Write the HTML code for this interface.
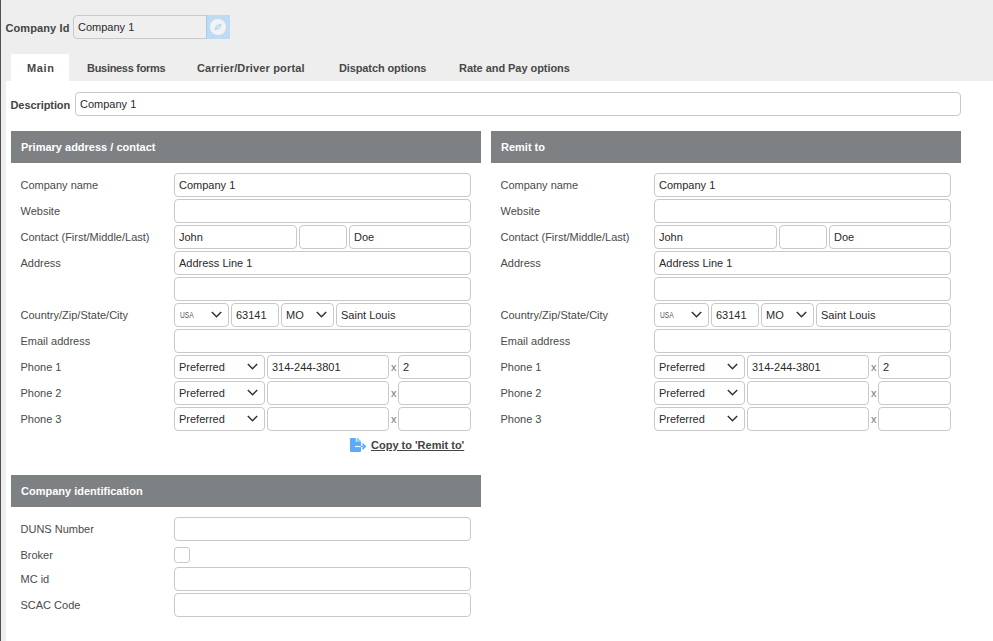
<!DOCTYPE html><html><head><meta charset='utf-8'><style>
*{box-sizing:border-box;margin:0;padding:0}
html,body{width:993px;height:641px;overflow:hidden;background:#fff;font-family:"Liberation Sans",sans-serif;font-size:11px}
.abs{position:absolute}
.topbar{position:absolute;left:0;top:0;width:993px;height:81px;background:#eeeeee}
.lb{position:absolute;left:0;top:0;width:1px;height:641px;background:#505050}
.lstrip{position:absolute;left:1px;top:81px;width:5px;height:560px;background:#eeeeee}
.inp{position:absolute;height:24px;border:1px solid #c9c9c9;border-radius:4px;background:#fff;color:#2a2a2a;padding-left:4px;line-height:22px;white-space:nowrap;overflow:hidden}
.lbl{position:absolute;color:#4a4a4a;line-height:14px;white-space:nowrap}
.hdr{position:absolute;height:32px;background:#7e8184;color:#fff;font-weight:bold;line-height:32px;padding-left:10px}
.tab{position:absolute;top:61px;font-weight:bold;color:#484848;line-height:14px;white-space:nowrap}
.sel .chev{position:absolute;top:7.3px;width:11px;height:7px}
.x{position:absolute;color:#777;line-height:14px}
</style></head><body>
<div class='topbar'></div><div class='lstrip'></div><div class='lb'></div>
<div class='lbl' style='left:5.5px;top:21px;font-weight:bold;color:#444;letter-spacing:0.1px'>Company Id</div>
<div class='inp' style='left:73px;top:15px;width:134px;background:#efefef;border-radius:4px 0 0 4px'>Company 1</div>
<div class='abs' style='left:206px;top:15px;width:24px;height:24px;background:#bddcf4;border-left:1px solid #a9c9e3'><svg width='24' height='24' viewBox='0 0 24 24' style='position:absolute;left:-1px;top:0'><circle cx='12' cy='12' r='8' fill='#f3f3f3'/><path d='M16 8.5 L13.7 13.9 L8 15.5 L10.3 10.1 Z' fill='#bddcf4'/><rect x='11.2' y='11.2' width='1.6' height='1.6' fill='#f3f3f3'/></svg></div>
<div class='abs' style='left:11px;top:54px;width:58px;height:27px;background:#fff'></div>
<div class='tab' style='left:27px;letter-spacing:0.65px'>Main</div>
<div class='tab' style='left:87px;letter-spacing:-0.3px'>Business forms</div>
<div class='tab' style='left:197px;letter-spacing:0.15px'>Carrier/Driver portal</div>
<div class='tab' style='left:339px;letter-spacing:-0.12px'>Dispatch options</div>
<div class='tab' style='left:459px;letter-spacing:-0.05px'>Rate and Pay options</div>
<div class='lbl' style='left:10.5px;top:98px;font-weight:bold;color:#444;letter-spacing:-0.08px'>Description</div>
<div class='inp' style='left:75px;top:92px;width:886px'>Company 1</div>
<div class='hdr' style='left:11px;top:131px;width:470px'>Primary address / contact</div>
<div class='lbl' style='left:20.5px;top:178px'>Company name</div>
<div class='lbl' style='left:20.5px;top:204px'>Website</div>
<div class='lbl' style='left:20.5px;top:230px'>Contact (First/Middle/Last)</div>
<div class='lbl' style='left:20.5px;top:256px'>Address</div>
<div class='lbl' style='left:20.5px;top:308px'>Country/Zip/State/City</div>
<div class='lbl' style='left:20.5px;top:334px'>Email address</div>
<div class='lbl' style='left:20.5px;top:360px'>Phone 1</div>
<div class='lbl' style='left:20.5px;top:386px'>Phone 2</div>
<div class='lbl' style='left:20.5px;top:412px'>Phone 3</div>
<div class='inp' style='left:174px;top:173px;width:297px'>Company 1</div>
<div class='inp' style='left:174px;top:199px;width:297px'></div>
<div class='inp' style='left:174px;top:225px;width:123px'>John</div>
<div class='inp' style='left:299px;top:225px;width:48px'></div>
<div class='inp' style='left:349px;top:225px;width:122px'>Doe</div>
<div class='inp' style='left:174px;top:251px;width:297px'>Address Line 1</div>
<div class='inp' style='left:174px;top:277px;width:297px'></div>
<div class='inp sel' style='left:174px;top:303px;width:55px'><span style='display:inline-block;font-size:8.3px;color:#555;transform:scaleX(0.8);transform-origin:0 50%;margin-left:0.6px;position:relative;top:-1px'>USA</span><svg class='chev' viewBox='0 0 11 7' style='right:6.5px'><path d='M0.8 1 L5.5 5.7 L10.2 1' fill='none' stroke='#333' stroke-width='1.5'/></svg></div>
<div class='inp' style='left:231px;top:303px;width:48px'>63141</div>
<div class='inp sel' style='left:281px;top:303px;width:53px'>MO<svg class='chev' viewBox='0 0 11 7' style='right:6.5px'><path d='M0.8 1 L5.5 5.7 L10.2 1' fill='none' stroke='#333' stroke-width='1.5'/></svg></div>
<div class='inp' style='left:336px;top:303px;width:135px'>Saint Louis</div>
<div class='inp' style='left:174px;top:329px;width:297px'></div>
<div class='inp sel' style='left:174px;top:355px;width:91px'>Preferred<svg class='chev' viewBox='0 0 11 7' style='right:6.5px'><path d='M0.8 1 L5.5 5.7 L10.2 1' fill='none' stroke='#333' stroke-width='1.5'/></svg></div>
<div class='inp' style='left:267px;top:355px;width:122px'>314-244-3801</div>
<div class='x' style='left:391px;top:360px'>x</div>
<div class='inp' style='left:398px;top:355px;width:73px'>2</div>
<div class='inp sel' style='left:174px;top:381px;width:91px'>Preferred<svg class='chev' viewBox='0 0 11 7' style='right:6.5px'><path d='M0.8 1 L5.5 5.7 L10.2 1' fill='none' stroke='#333' stroke-width='1.5'/></svg></div>
<div class='inp' style='left:267px;top:381px;width:122px'></div>
<div class='x' style='left:391px;top:386px'>x</div>
<div class='inp' style='left:398px;top:381px;width:73px'></div>
<div class='inp sel' style='left:174px;top:407px;width:91px'>Preferred<svg class='chev' viewBox='0 0 11 7' style='right:6.5px'><path d='M0.8 1 L5.5 5.7 L10.2 1' fill='none' stroke='#333' stroke-width='1.5'/></svg></div>
<div class='inp' style='left:267px;top:407px;width:122px'></div>
<div class='x' style='left:391px;top:412px'>x</div>
<div class='inp' style='left:398px;top:407px;width:73px'></div>
<svg class='abs' style='left:345px;top:432px' width='30' height='25' viewBox='0 0 30 25'><path d='M6 6 L12.5 6 L16 9.5 L16 19 Q16 20 15 20 L6 20 Q5 20 5 19 L5 7 Q5 6 6 6 Z' fill='#5eaaf6'/><path d='M11.8 6 L12.5 6 L16 9.5 L16 9.8 L11.8 9.8 Z' fill='#9ccbf8'/><path d='M11.3 6 L11.3 9.8' stroke='#fff' stroke-width='0.9'/><path d='M10.2 14.5 L15.8 14.5' stroke='#fff' stroke-width='1.2'/><path d='M15.8 14.5 L20.2 14.5 M17.5 11.8 L20.2 14.5 L17.5 17.2' fill='none' stroke='#5eaaf6' stroke-width='1.6'/></svg>
<div class='abs' style='left:371px;top:438px;font-weight:bold;color:#444;text-decoration:underline;line-height:14px;white-space:nowrap'>Copy to 'Remit to'</div>
<div class='hdr' style='left:491px;top:131px;width:470px'>Remit to</div>
<div class='lbl' style='left:500.5px;top:178px'>Company name</div>
<div class='lbl' style='left:500.5px;top:204px'>Website</div>
<div class='lbl' style='left:500.5px;top:230px'>Contact (First/Middle/Last)</div>
<div class='lbl' style='left:500.5px;top:256px'>Address</div>
<div class='lbl' style='left:500.5px;top:308px'>Country/Zip/State/City</div>
<div class='lbl' style='left:500.5px;top:334px'>Email address</div>
<div class='lbl' style='left:500.5px;top:360px'>Phone 1</div>
<div class='lbl' style='left:500.5px;top:386px'>Phone 2</div>
<div class='lbl' style='left:500.5px;top:412px'>Phone 3</div>
<div class='inp' style='left:654px;top:173px;width:297px'>Company 1</div>
<div class='inp' style='left:654px;top:199px;width:297px'></div>
<div class='inp' style='left:654px;top:225px;width:123px'>John</div>
<div class='inp' style='left:779px;top:225px;width:48px'></div>
<div class='inp' style='left:829px;top:225px;width:122px'>Doe</div>
<div class='inp' style='left:654px;top:251px;width:297px'>Address Line 1</div>
<div class='inp' style='left:654px;top:277px;width:297px'></div>
<div class='inp sel' style='left:654px;top:303px;width:55px'><span style='display:inline-block;font-size:8.3px;color:#555;transform:scaleX(0.8);transform-origin:0 50%;margin-left:0.6px;position:relative;top:-1px'>USA</span><svg class='chev' viewBox='0 0 11 7' style='right:6.5px'><path d='M0.8 1 L5.5 5.7 L10.2 1' fill='none' stroke='#333' stroke-width='1.5'/></svg></div>
<div class='inp' style='left:711px;top:303px;width:48px'>63141</div>
<div class='inp sel' style='left:761px;top:303px;width:53px'>MO<svg class='chev' viewBox='0 0 11 7' style='right:6.5px'><path d='M0.8 1 L5.5 5.7 L10.2 1' fill='none' stroke='#333' stroke-width='1.5'/></svg></div>
<div class='inp' style='left:816px;top:303px;width:135px'>Saint Louis</div>
<div class='inp' style='left:654px;top:329px;width:297px'></div>
<div class='inp sel' style='left:654px;top:355px;width:91px'>Preferred<svg class='chev' viewBox='0 0 11 7' style='right:6.5px'><path d='M0.8 1 L5.5 5.7 L10.2 1' fill='none' stroke='#333' stroke-width='1.5'/></svg></div>
<div class='inp' style='left:747px;top:355px;width:122px'>314-244-3801</div>
<div class='x' style='left:871px;top:360px'>x</div>
<div class='inp' style='left:878px;top:355px;width:73px'>2</div>
<div class='inp sel' style='left:654px;top:381px;width:91px'>Preferred<svg class='chev' viewBox='0 0 11 7' style='right:6.5px'><path d='M0.8 1 L5.5 5.7 L10.2 1' fill='none' stroke='#333' stroke-width='1.5'/></svg></div>
<div class='inp' style='left:747px;top:381px;width:122px'></div>
<div class='x' style='left:871px;top:386px'>x</div>
<div class='inp' style='left:878px;top:381px;width:73px'></div>
<div class='inp sel' style='left:654px;top:407px;width:91px'>Preferred<svg class='chev' viewBox='0 0 11 7' style='right:6.5px'><path d='M0.8 1 L5.5 5.7 L10.2 1' fill='none' stroke='#333' stroke-width='1.5'/></svg></div>
<div class='inp' style='left:747px;top:407px;width:122px'></div>
<div class='x' style='left:871px;top:412px'>x</div>
<div class='inp' style='left:878px;top:407px;width:73px'></div>
<div class='hdr' style='left:11px;top:475px;width:470px'>Company identification</div>
<div class='lbl' style='left:20.5px;top:522px'>DUNS Number</div>
<div class='lbl' style='left:20.5px;top:548px'>Broker</div>
<div class='lbl' style='left:20.5px;top:572px'>MC id</div>
<div class='lbl' style='left:20.5px;top:598px'>SCAC Code</div>
<div class='inp' style='left:174px;top:517px;width:297px'></div>
<div class='abs' style='left:174px;top:547px;width:16px;height:16px;border:1px solid #c9c9c9;border-radius:3px'></div>
<div class='inp' style='left:174px;top:567px;width:297px'></div>
<div class='inp' style='left:174px;top:593px;width:297px'></div>
</body></html>
